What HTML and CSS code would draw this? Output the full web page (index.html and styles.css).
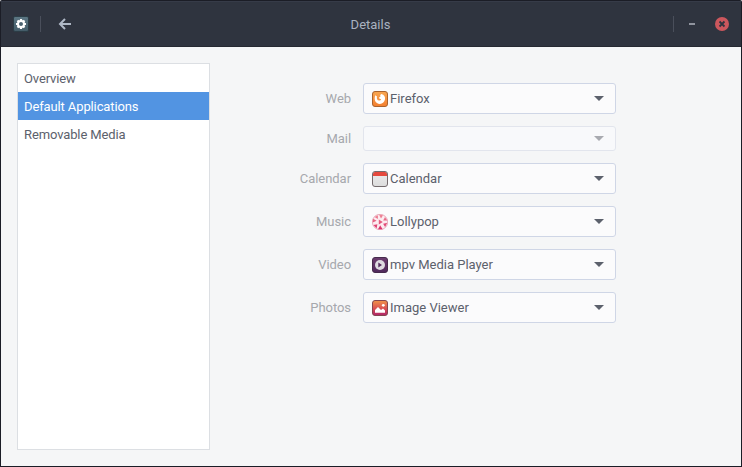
FILE: index.html
```
<!DOCTYPE html>
<html lang="en">
<head>
<meta charset="utf-8">
<title>Details</title>
<link rel="stylesheet" href="styles.css">
</head>
<body>
<div class="window">
  <header class="titlebar">
    <svg class="app-icon" width="16" height="16" viewBox="0 0 16 16">
      <defs><linearGradient id="slate" x1="0" y1="0" x2="0" y2="1"><stop offset="0" stop-color="#5d7784"/><stop offset="1" stop-color="#435b68"/></linearGradient></defs>
      <rect x=".5" y=".5" width="15" height="15" rx="1.5" fill="url(#slate)" stroke="#2c3d46"/>
      <path d="M8 3v10M3 8h10M4.5 4.5l7 7M11.5 4.5l-7 7" stroke="#fff" stroke-width="2.2"/>
      <circle cx="8" cy="8" r="3" fill="#4b6370" stroke="#fff" stroke-width="2"/>
    </svg>
    <i class="divider"></i>
    <svg class="back" width="14" height="14" viewBox="0 0 14 14"><path d="M13 7H2.5M7 2L2 7l5 5" fill="none" stroke="#afb8c6" stroke-width="2"/></svg>
    <h1 class="title">Details</h1>
    <i class="divider"></i>
    <i class="minimize"></i>
    <svg class="close" width="14" height="14" viewBox="0 0 14 14"><circle cx="7" cy="7" r="7" fill="#cc575d"/><path d="M4.5 4.5l5 5M9.5 4.5l-5 5" stroke="#2f343f" stroke-width="1.8"/></svg>
  </header>
  <main class="content">
    <ul class="sidebar">
      <li>Overview</li>
      <li class="selected">Default Applications</li>
      <li>Removable Media</li>
    </ul>
    <div class="form">
      <div class="row"><span class="label">Web</span>
        <div class="combo"><svg class="icon" width="16" height="16" viewBox="0 0 16 16">
          <defs><linearGradient id="orange" x1="0" y1="0" x2="0" y2="1"><stop offset="0" stop-color="#f8a650"/><stop offset="1" stop-color="#f37f30"/></linearGradient></defs>
          <rect x=".5" y=".5" width="15" height="15" rx="2.5" fill="url(#orange)" stroke="#a9632f"/>
          <path d="M3.2 4.2L5 5.4C4.5 7.1 4.9 9.3 7.3 9.6c1.7 0 2.2-1 1.2-1.5C7.1 7.7 6.7 6.8 7.6 6l1-.5C7.8 4.5 8.4 3.6 9.4 3c2.8.8 4 2.7 3.6 5.3-.4 2.7-2.4 4.6-5.1 4.6-4.6-.3-6.1-4-4.7-8.7z" fill="#fff"/></svg>
          <span>Firefox</span><i class="arrow"></i></div></div>
      <div class="row"><span class="label">Mail</span>
        <div class="combo disabled"><i class="arrow"></i></div></div>
      <div class="row"><span class="label">Calendar</span>
        <div class="combo"><svg class="icon" width="16" height="16" viewBox="0 0 16 16">
          <defs><linearGradient id="paper" x1="0" y1="0" x2="0" y2="1"><stop offset="0" stop-color="#ededed"/><stop offset="1" stop-color="#dcdcdc"/></linearGradient></defs>
          <rect x=".5" y=".5" width="15" height="15" rx="2.5" fill="url(#paper)"/>
          <path d="M1 5V3q0-2 2-2h10q2 0 2 2v2z" fill="#e5493d"/>
          <rect x=".5" y=".5" width="15" height="15" rx="2.5" fill="none" stroke="#746b6d"/></svg>
          <span>Calendar</span><i class="arrow"></i></div></div>
      <div class="row"><span class="label">Music</span>
        <div class="combo"><svg class="icon" width="16" height="16" viewBox="0 0 16 16">
          <defs><linearGradient id="candy" x1="0" y1="0" x2="0" y2="1"><stop offset="0" stop-color="#f08a98"/><stop offset="1" stop-color="#d92d68"/></linearGradient></defs>
          <circle cx="8" cy="8" r="7.7" fill="#fcecf0" stroke="#dc7f9a" stroke-width=".6"/>
          <path d="M7 .6l4 .6-2 3.2zM13 3l2.3 3.6-4.1-.2zM15.2 8.8l-2.1 4.2-2-3.2zM10.6 15.2H6l2.2-3.9zM4.6 14.2L1.4 11l4-.8zM.7 8.4l.4-3.6 3.5 2zM2.6 3L6 1.3 5.8 5zM6.8 5.6l4 2.4-4 2.4z" fill="url(#candy)"/></svg>
          <span>Lollypop</span><i class="arrow"></i></div></div>
      <div class="row"><span class="label">Video</span>
        <div class="combo"><svg class="icon" width="16" height="16" viewBox="0 0 16 16">
          <defs><linearGradient id="purple" x1="0" y1="0" x2="0" y2="1"><stop offset="0" stop-color="#6b3b6e"/><stop offset="1" stop-color="#50295c"/></linearGradient></defs>
          <rect x=".5" y=".5" width="15" height="15" rx="2.5" fill="url(#purple)" stroke="#452a4c"/>
          <circle cx="8" cy="8" r="5" fill="#dedbe1"/><path d="M6.3 5.5L10 8l-3.7 2.5z" fill="#532b5e"/></svg>
          <span>mpv Media Player</span><i class="arrow"></i></div></div>
      <div class="row"><span class="label">Photos</span>
        <div class="combo"><svg class="icon" width="16" height="16" viewBox="0 0 16 16">
          <defs><linearGradient id="sunset" x1="0" y1="0" x2="0" y2="1"><stop offset="0" stop-color="#f19449"/><stop offset=".55" stop-color="#d94d55"/><stop offset="1" stop-color="#ad246a"/></linearGradient></defs>
          <rect x=".5" y=".5" width="15" height="15" rx="2.5" fill="url(#sunset)" stroke="#854550"/>
          <path d="M3 12.8V10l3-3 3 3 2-1.5 2 2v2.3z" fill="#fff"/><circle cx="11.3" cy="5.3" r="1.4" fill="#fff"/></svg>
          <span>Image Viewer</span><i class="arrow"></i></div></div>
    </div>
  </main>
</div>
</body>
</html>
```
FILE: styles.css
```
* { box-sizing: border-box; }
body {
  margin: 0;
  background: #fff;
  font: 13px/20px Roboto, "Liberation Sans", sans-serif;
  color: #5c616c;
}
.window {
  width: 742px;
  height: 467px;
  display: flex;
  flex-direction: column;
  border: 1px solid #1b1d26;
  border-top: 0;
  border-radius: 2px 2px 0 0;
  background: #f5f6f7;
  overflow: hidden;
}
.titlebar {
  height: 47px;
  flex: none;
  display: flex;
  align-items: center;
  padding: 1px 12px 0;
  background: #2f343f;
  border-top: 1px solid #1b1d26;
  border-bottom: 1px solid #262932;
  box-shadow: inset 0 1px #363b48;
}
.divider { width: 1px; height: 16px; background: #4a4f5b; }
.app-icon { margin-right: 11px; }
.back { margin-left: 17px; }
.title {
  flex: 1;
  margin: 0 0 0 7px;
  padding: 2px 11px 0 0;
  text-align: center;
  font-size: 13px;
  font-weight: 400;
  color: #a9b2c0;
}
.minimize { width: 6px; height: 2px; margin: 0 20px 0 15px; background: #90949e; }
.content { flex: 1; display: flex; padding: 16px; }
.sidebar {
  width: 193px;
  margin: 0;
  padding: 0;
  list-style: none;
  letter-spacing: -.12px;
  background: #fff;
  border: 1px solid #dcdfe3;
}
.sidebar li { height: 28px; padding: 5px 6px 3px; }
.sidebar .selected { background: #5294e2; color: #fff; }
.form {
  display: flex;
  flex-direction: column;
  gap: 12px;
  margin-left: 80px;
  padding-top: 20px;
}
.row { display: flex; align-items: center; gap: 12px; }
.label { width: 61px; text-align: right; letter-spacing: -.05px; color: #a6a8ad; }
.combo {
  width: 253px;
  height: 31px;
  display: flex;
  align-items: center;
  padding: 0 11px 0 8px;
  background: #fbfbfc;
  border: 1px solid #cfd6e6;
  border-radius: 3px;
}
.combo.disabled { height: 25px; background: #f8f9fb; border-color: #e2e5ed; }
.icon { margin-right: 2px; }
.arrow {
  width: 10px;
  height: 5px;
  margin-left: auto;
  background: #5c616c;
  clip-path: polygon(0 0, 100% 0, 50% 100%);
}
.disabled .arrow { background: #a8aab0; }
```
